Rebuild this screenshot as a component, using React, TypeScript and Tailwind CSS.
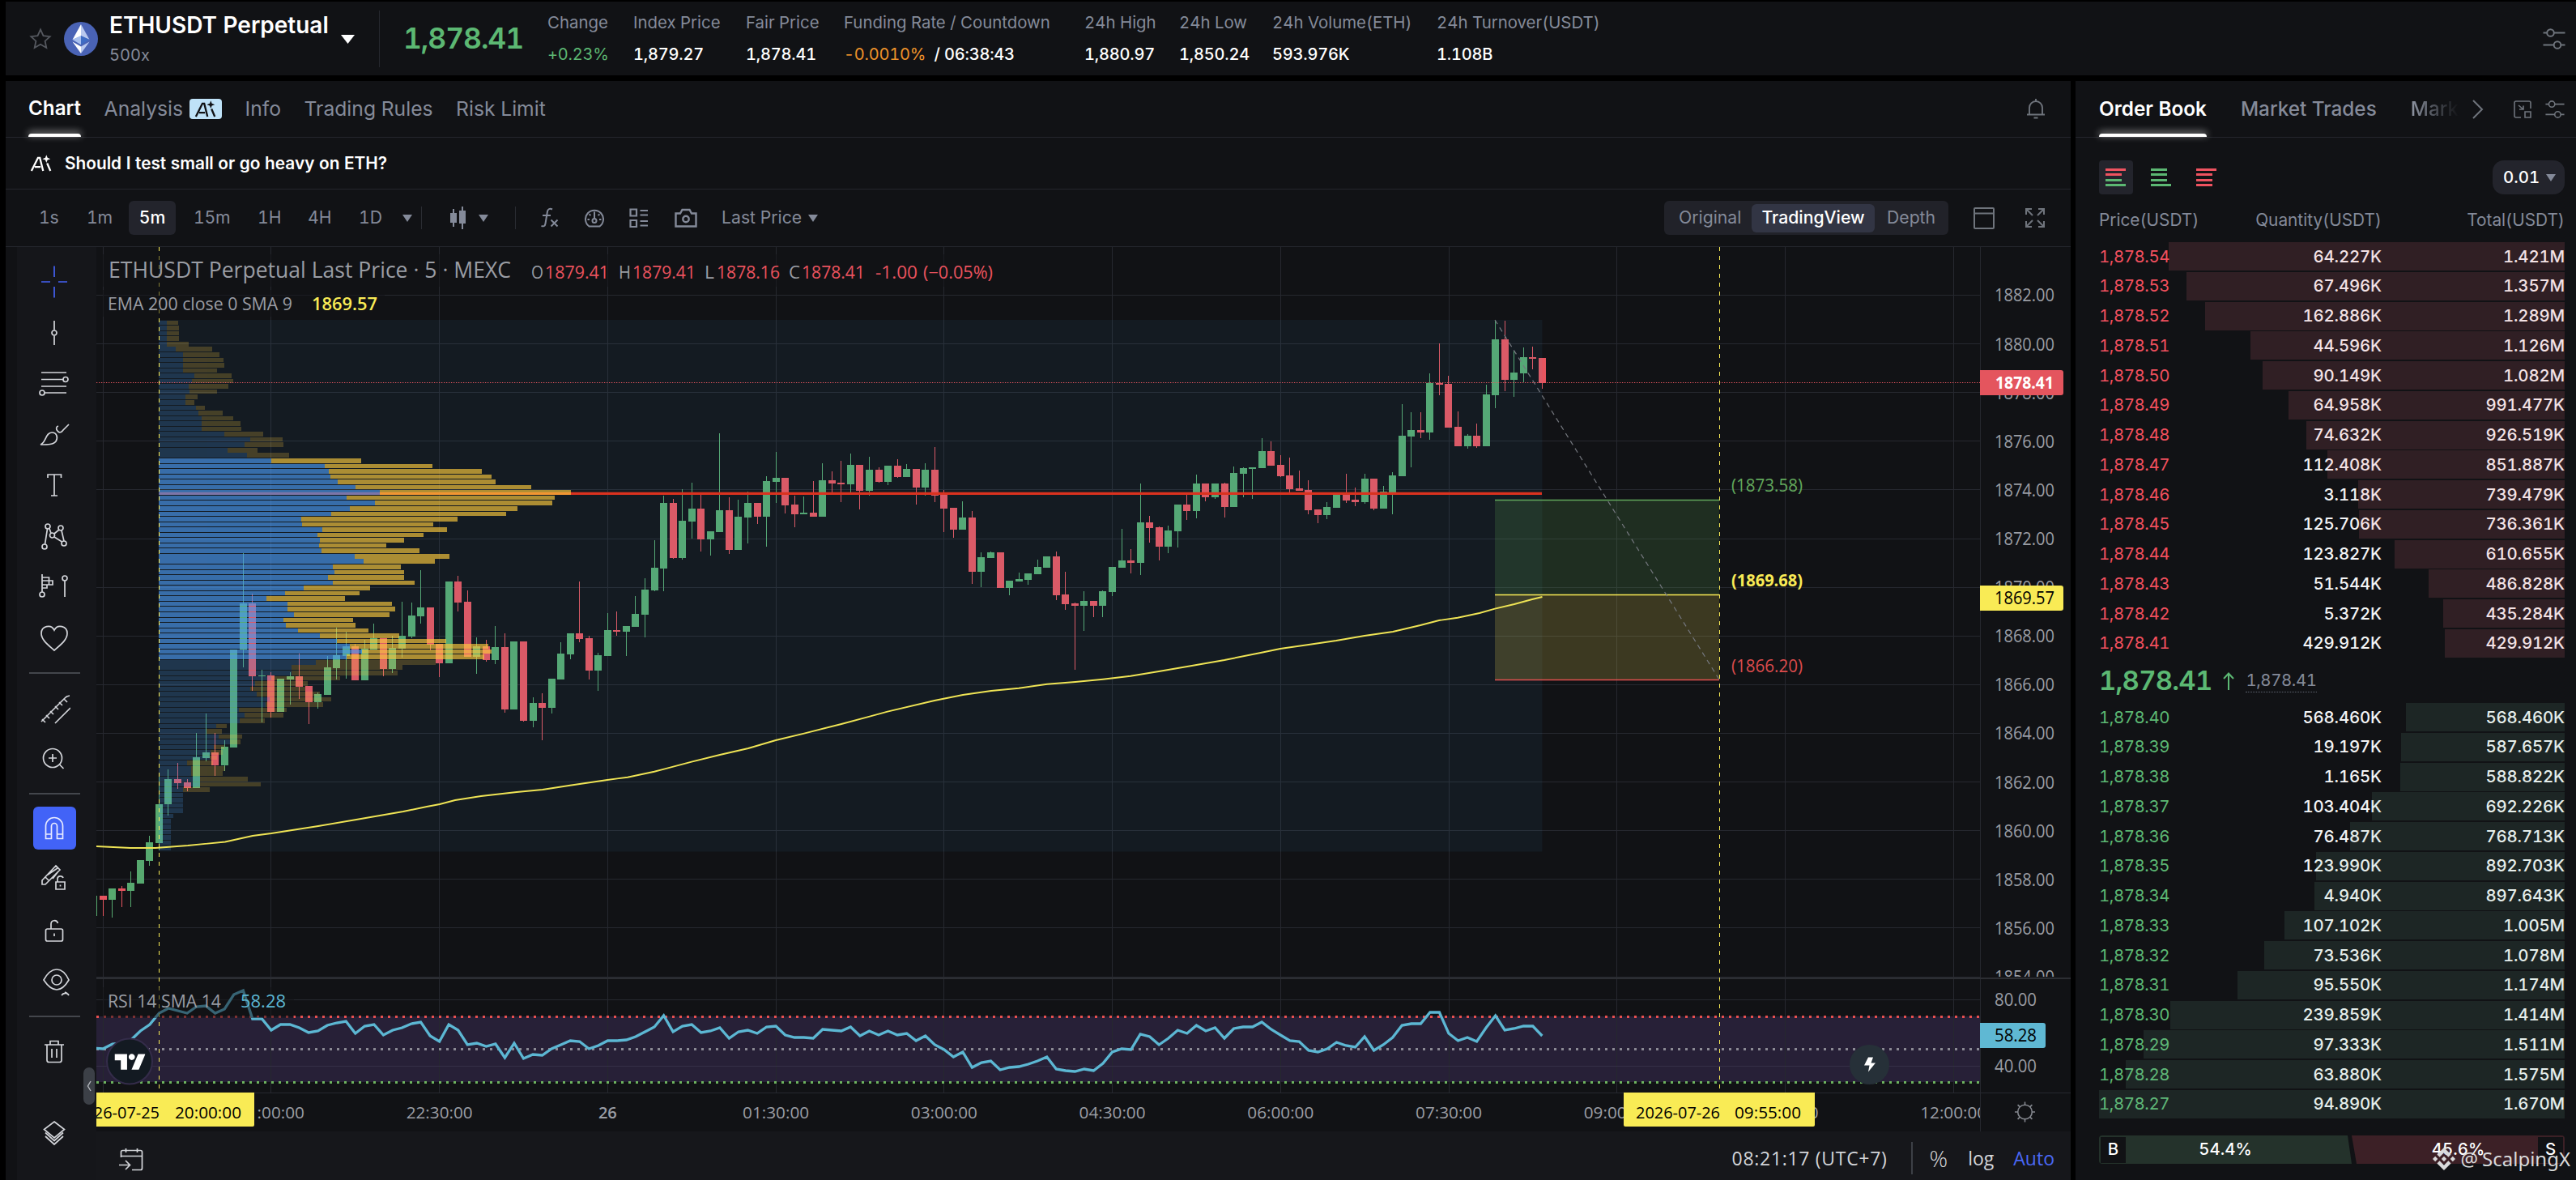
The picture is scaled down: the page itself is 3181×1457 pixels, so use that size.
import type { ReactNode } from "react";
import { SiBinance, SiTradingview } from "react-icons/si";

/* ---------- data ---------- */

// up(1)/down(0), high, body top, body bottom, low
type Candle = [number, number, number, number, number];

const candles: Candle[] = [
  [1, 1106, 1106, 1131, 1131], [0, 1106, 1106, 1111, 1131], [1, 1097, 1097, 1111, 1133], [0, 1094, 1097, 1100, 1120],
  [1, 1076, 1090, 1100, 1120], [1, 1062, 1062, 1091, 1091], [1, 1032, 1040, 1063, 1069], [1, 958, 993, 1041, 1050],
  [1, 950, 962, 993, 1007], [0, 942, 962, 967, 974], [0, 962, 966, 973, 977], [1, 905, 935, 973, 973],
  [1, 881, 929, 936, 940], [0, 905, 929, 945, 958], [1, 914, 922, 945, 952], [1, 802, 802, 923, 923],
  [1, 683, 745, 802, 824], [0, 733, 745, 835, 853], [1, 827, 834, 835, 892], [0, 830, 834, 879, 886],
  [1, 838, 838, 879, 879], [1, 830, 835, 839, 870], [0, 807, 835, 848, 863], [0, 847, 847, 867, 894],
  [1, 855, 857, 867, 875], [1, 810, 824, 858, 858], [1, 775, 809, 825, 839], [1, 780, 798, 810, 838],
  [0, 795, 798, 840, 840], [1, 790, 801, 840, 840], [1, 770, 788, 802, 802], [0, 788, 788, 826, 835],
  [1, 785, 800, 826, 831], [1, 743, 785, 801, 812], [1, 744, 760, 786, 788], [1, 704, 750, 761, 770],
  [0, 750, 750, 796, 803], [0, 795, 795, 819, 836], [1, 718, 718, 819, 819], [0, 711, 718, 744, 755],
  [0, 729, 743, 811, 811], [1, 787, 798, 811, 832], [0, 790, 798, 815, 817], [1, 773, 799, 815, 820],
  [0, 782, 799, 876, 880], [1, 792, 792, 876, 876], [0, 792, 792, 890, 891], [1, 861, 868, 890, 898],
  [0, 856, 868, 874, 914], [1, 838, 838, 874, 881], [1, 793, 807, 839, 839], [1, 782, 782, 808, 814],
  [0, 718, 782, 789, 793], [0, 785, 788, 828, 839], [1, 806, 809, 828, 853], [1, 757, 778, 810, 810],
  [0, 755, 778, 780, 785], [1, 773, 773, 780, 810], [1, 736, 758, 774, 774], [1, 714, 728, 759, 787],
  [1, 667, 701, 729, 730], [1, 612, 621, 702, 730], [0, 616, 621, 689, 690], [1, 604, 643, 689, 691],
  [1, 596, 628, 644, 665], [0, 610, 628, 666, 681], [1, 656, 656, 666, 686], [1, 535, 630, 657, 657],
  [0, 614, 630, 679, 684], [1, 617, 638, 679, 679], [1, 607, 621, 639, 671], [0, 621, 621, 638, 647],
  [1, 588, 594, 638, 675], [1, 558, 590, 595, 621], [0, 590, 590, 624, 634], [0, 612, 623, 635, 651],
  [1, 613, 633, 635, 635], [0, 594, 633, 638, 638], [1, 572, 593, 638, 638], [0, 582, 593, 597, 609],
  [0, 569, 596, 598, 620], [1, 560, 574, 598, 608], [0, 574, 574, 606, 629], [1, 564, 580, 606, 612],
  [0, 577, 580, 595, 596], [1, 575, 575, 595, 599], [0, 567, 575, 589, 590], [1, 573, 579, 589, 589],
  [0, 579, 579, 602, 623], [1, 572, 580, 602, 612], [0, 552, 580, 612, 620], [0, 605, 611, 628, 657],
  [0, 627, 627, 654, 664], [1, 619, 639, 654, 654], [0, 631, 639, 706, 721], [1, 682, 688, 706, 725],
  [1, 681, 682, 689, 689], [0, 682, 682, 726, 726], [1, 717, 717, 726, 735], [1, 707, 715, 718, 718],
  [1, 708, 708, 716, 722], [1, 691, 700, 709, 709], [1, 687, 687, 701, 701], [0, 681, 687, 735, 741],
  [0, 706, 734, 746, 753], [0, 744, 745, 748, 827], [1, 730, 742, 748, 779], [0, 742, 742, 748, 762],
  [1, 729, 730, 748, 762], [1, 700, 700, 731, 736], [1, 653, 692, 701, 701], [0, 678, 692, 695, 708],
  [1, 597, 645, 695, 710], [0, 637, 645, 652, 670], [0, 650, 651, 675, 692], [1, 649, 655, 675, 683],
  [1, 623, 623, 656, 676], [0, 610, 623, 631, 642], [1, 586, 597, 631, 640], [0, 597, 597, 614, 619],
  [1, 597, 597, 614, 616], [0, 596, 597, 626, 639], [1, 576, 584, 626, 626], [1, 577, 578, 585, 614],
  [1, 577, 577, 579, 616], [1, 541, 557, 578, 578], [0, 545, 557, 575, 575], [0, 562, 574, 588, 589],
  [0, 565, 587, 604, 609], [0, 581, 603, 606, 606], [0, 593, 605, 630, 635], [0, 629, 629, 636, 646],
  [1, 620, 626, 636, 641], [1, 610, 610, 627, 627], [0, 585, 610, 618, 621], [0, 602, 617, 620, 625],
  [1, 585, 591, 620, 622], [0, 591, 591, 628, 630], [1, 600, 607, 628, 628], [1, 583, 587, 609, 635],
  [1, 499, 538, 588, 588], [1, 509, 531, 539, 577], [0, 509, 531, 534, 541], [1, 461, 473, 534, 543],
  [0, 424, 473, 475, 488], [0, 464, 474, 528, 528], [0, 508, 527, 551, 551], [1, 536, 538, 551, 554],
  [0, 523, 538, 551, 553], [1, 475, 487, 551, 551], [1, 395, 419, 488, 504], [0, 396, 419, 469, 483],
  [1, 433, 460, 469, 490], [1, 429, 441, 461, 472], [0, 428, 441, 443, 456], [0, 442, 442, 473, 480],
];

const rsi = [
  1294, 1295, 1289, 1288, 1284, 1273, 1265, 1251, 1245, 1248, 1251, 1243, 1242, 1251, 1246, 1228, 1223, 1258, 1258,
  1272, 1265, 1265, 1269, 1275, 1273, 1266, 1263, 1261, 1276, 1267, 1265, 1278, 1272, 1269, 1264, 1262, 1279, 1286,
  1265, 1272, 1290, 1288, 1292, 1289, 1306, 1288, 1307, 1302, 1303, 1295, 1290, 1285, 1286, 1295, 1291, 1285, 1285,
  1284, 1280, 1274, 1268, 1254, 1274, 1267, 1265, 1275, 1273, 1269, 1282, 1274, 1272, 1276, 1268, 1267, 1278, 1281,
  1281, 1282, 1271, 1272, 1273, 1268, 1279, 1273, 1278, 1273, 1278, 1276, 1285, 1279, 1290, 1296, 1305, 1299, 1318,
  1312, 1310, 1321, 1318, 1317, 1314, 1310, 1305, 1320, 1322, 1323, 1320, 1322, 1313, 1299, 1295, 1296, 1277, 1280,
  1290, 1282, 1272, 1276, 1266, 1273, 1269, 1282, 1270, 1268, 1268, 1262, 1271, 1278, 1285, 1286, 1297, 1299, 1295,
  1287, 1291, 1293, 1280, 1297, 1290, 1281, 1266, 1264, 1264, 1250, 1250, 1276, 1285, 1281, 1286, 1269, 1254, 1272,
  1270, 1267, 1267, 1279,
];

const ema =
  "119,1045 161,1047 192,1047 232,1044 278,1039.5 312,1032 335,1029 393,1020 440,1012 498,1002 527,996 543,993 562,988 594,983 638,978 670,975 704,969.7 750,963 775,959.7 808,952.7 820,949.7 854,940.7 889,932 924,924 958,914 993,905.7 1039,894 1074,884.7 1096,878.7 1154,865 1189,858 1224,853 1258,849.7 1293,844.7 1328,842 1362,838.7 1396,834.7 1431,829 1466,823 1512,815 1558,805.7 1581,801 1616,796 1650,791 1685,785 1720,780 1754,772 1777,766 1800,762.7 1827,757 1846,751.7 1870,746 1892,740 1904.5,737";

// volume profile rows from the top: [buy volume, total volume]
const profile: [number, number][] = [
  [21, 53], [21, 55], [21, 55], [21, 55], [21, 82], [46, 147], [66, 167], [66, 178], [66, 180], [66, 160],
  [98, 201], [91, 205], [82, 192], [84, 160], [73, 107], [73, 98], [102, 127], [109, 176], [118, 205], [118, 225],
  [118, 228], [180, 288], [252, 342], [236, 344], [189, 272], [243, 360], [310, 559], [458, 756], [469, 893], [474, 920],
  [494, 931], [543, 1029], [611, 1139], [519, 1094], [597, 1088], [528, 991], [476, 960], [393, 826], [396, 758], [452, 796],
  [438, 732], [445, 678], [443, 628], [449, 720], [541, 803], [566, 763], [481, 669], [485, 678], [467, 678], [481, 707],
  [400, 584], [348, 555], [297, 514], [355, 644], [355, 653], [373, 637], [344, 537], [351, 543], [384, 579], [445, 664],
  [492, 794], [528, 911], [561, 920], [519, 900], [434, 765], [366, 673], [366, 660], [310, 501], [266, 411], [252, 405],
  [270, 445], [305, 476], [295, 454], [221, 353], [236, 344], [223, 292], [158, 187], [132, 174], [165, 230], [197, 225],
  [152, 180], [143, 175], [140, 160], [77, 150], [89, 182], [89, 176], [113, 245], [113, 281], [66, 140], [66, 66],
  [66, 66], [66, 66], [66, 66], [39, 39], [33, 33], [33, 33], [33, 33], [33, 33], [33, 33], [33, 33],
];

const asks = [
  ["1,878.54", "64.227K", "1.421M"],
  ["1,878.53", "67.496K", "1.357M"],
  ["1,878.52", "162.886K", "1.289M"],
  ["1,878.51", "44.596K", "1.126M"],
  ["1,878.50", "90.149K", "1.082M"],
  ["1,878.49", "64.958K", "991.477K"],
  ["1,878.48", "74.632K", "926.519K"],
  ["1,878.47", "112.408K", "851.887K"],
  ["1,878.46", "3.118K", "739.479K"],
  ["1,878.45", "125.706K", "736.361K"],
  ["1,878.44", "123.827K", "610.655K"],
  ["1,878.43", "51.544K", "486.828K"],
  ["1,878.42", "5.372K", "435.284K"],
  ["1,878.41", "429.912K", "429.912K"],
];

const bids = [
  ["1,878.40", "568.460K", "568.460K"],
  ["1,878.39", "19.197K", "587.657K"],
  ["1,878.38", "1.165K", "588.822K"],
  ["1,878.37", "103.404K", "692.226K"],
  ["1,878.36", "76.487K", "768.713K"],
  ["1,878.35", "123.990K", "892.703K"],
  ["1,878.34", "4.940K", "897.643K"],
  ["1,878.33", "107.102K", "1.005M"],
  ["1,878.32", "73.536K", "1.078M"],
  ["1,878.31", "95.550K", "1.174M"],
  ["1,878.30", "239.859K", "1.414M"],
  ["1,878.29", "97.333K", "1.511M"],
  ["1,878.28", "63.880K", "1.575M"],
  ["1,878.27", "94.890K", "1.670M"],
];

const MAX_TOTAL = 1670;
const depth = (total: string) => (parseFloat(total) * (total.endsWith("M") ? 1000 : 1)) / MAX_TOTAL;

/* ---------- small pieces ---------- */

function Caret({ className = "h-[9px] w-3" }: { className?: string }) {
  return (
    <svg viewBox="0 0 12 9" preserveAspectRatio="none" className={`shrink-0 fill-current ${className}`}>
      <path d="M0 0h12L6 9z" />
    </svg>
  );
}

function Sliders({ className }: { className: string }) {
  return (
    <svg viewBox="0 0 28 28" fill="none" stroke="currentColor" strokeWidth="1.9" className={`shrink-0 ${className}`}>
      <path d="M0.5 6.5h4.7M13.8 6.5h13.7M0.5 21.5h13.2M22.3 21.5h5.2" />
      <circle cx="9.5" cy="6.5" r="4.3" />
      <circle cx="18" cy="21.5" r="4.3" />
    </svg>
  );
}

function AiMark({ className = "h-5 w-[30px]" }: { className?: string }) {
  return (
    <svg viewBox="0 0 30 20" className={`shrink-0 overflow-visible ${className}`} fill="none" stroke="currentColor" strokeWidth="2.6">
      <path d="M1.5 20 10.5 2h2.5L17.5 20M6 14.5h8M23 9.5l4.5 10.5" />
      <path d="M22-2l1.5 4 4 1.5-4 1.5L22 9l-1.5-4-4-1.5 4-1.5z" fill="currentColor" stroke="none" />
    </svg>
  );
}

function Tool({ className, children }: { className: string; children: ReactNode }) {
  return (
    <div className={`flex shrink-0 items-center justify-center ${className}`}>
      <svg viewBox="-20 -20 40 40" fill="none" stroke="currentColor" strokeWidth="1.7" className="h-10 w-10">
        {children}
      </svg>
    </div>
  );
}

function Rule({ className }: { className: string }) {
  return (
    <div className={`flex shrink-0 items-center justify-center ${className}`}>
      <div className="h-0.5 w-[63px] bg-[#43464c]" />
    </div>
  );
}

function BookRow({ row, side }: { row: string[]; side: "ask" | "bid" }) {
  return (
    <div className="relative mb-[1.75px] flex h-[35px] shrink-0 items-center pt-px">
      <span className={`w-[140px] tracking-[-0.4px] ${side === "ask" ? "text-[#f2505e]" : "text-[#5cb873]"}`}>{row[0]}</span>
      <span className="w-[209px] text-right font-medium tracking-[-0.15px] text-[#f4f5f6]">{row[1]}</span>
      <span className="flex-1 text-right font-medium tracking-[-0.15px] text-[#f4f5f6]">{row[2]}</span>
      <div
        className={`absolute inset-y-0 right-0 ${side === "ask" ? "bg-[rgba(240,110,130,0.14)]" : "bg-[rgba(120,190,160,0.12)]"}`}
        style={{ width: `${depth(row[2]) * 100}%` }}
      />
    </div>
  );
}

/* ---------- header ---------- */

const stats: { label: string; value: ReactNode; width: string }[] = [
  { label: "Change", value: <span className="font-normal text-[#5cb873]">+0.23%</span>, width: "w-[106px]" },
  { label: "Index Price", value: "1,879.27", width: "w-[139px]" },
  { label: "Fair Price", value: "1,878.41", width: "w-[121px]" },
  {
    label: "Funding Rate / Countdown",
    value: (
      <>
        <span className="font-normal text-[#ef932a]">-0.0010%</span>&nbsp; / 06:38:43
      </>
    ),
    width: "w-[297px]",
  },
  { label: "24h High", value: "1,880.97", width: "w-[117px]" },
  { label: "24h Low", value: "1,850.24", width: "w-[115px]" },
  { label: "24h Volume(ETH)", value: "593.976K", width: "w-[203px]" },
  { label: "24h Turnover(USDT)", value: "1.108B", width: "w-[230px]" },
];

function Header() {
  return (
    <header className="flex h-[91px] items-center bg-[#111215] pl-[29px] pr-[13px]">
      <svg viewBox="0 0 28 28" fill="none" stroke="#55585f" strokeWidth="1.8" className="h-7 w-7">
        <path d="M14 2.5l3.5 7.6 8.2 1-6.1 5.6 1.7 8.3L14 20.8 6.7 25l1.7-8.3-6.1-5.6 8.2-1z" />
      </svg>
      <svg viewBox="0 0 42 42" className="ml-[15px] h-[42px] w-[42px]">
        <circle cx="21" cy="21" r="21" fill="#4a63b5" />
        <path d="M21 3v14.5L10.5 22z" fill="#fff" />
        <path d="M21 3v14.5L31.5 22z" fill="#b9c8ee" />
        <path d="M21 17v11.3L10.5 22z" fill="#a9c0ee" />
        <path d="M21 17v11.3L31.5 22z" fill="#3f6cc4" />
        <path d="M21 30.5V39L10.5 24.5z" fill="#fff" />
        <path d="M21 30.5V39l10.5-14.5z" fill="#b9c8ee" />
      </svg>
      <div className="ml-3.5 flex w-[271px] flex-col whitespace-nowrap">
        <span className="text-[28px] leading-[34px] font-semibold text-white">ETHUSDT Perpetual</span>
        <span className="mt-1.5 text-[20px] leading-7 text-[#848a99]">500x</span>
      </div>
      <Caret className="mt-0.5 ml-[15px] h-[11px] w-[17px] text-white" />
      <div className="ml-[30px] h-[70px] w-px bg-[#26282e]" />
      <span className="ml-[29px] w-[178px] text-[35.5px] leading-none font-semibold tracking-[-1.1px] text-[#5cb873]">1,878.41</span>
      <div className="flex text-[20px] whitespace-nowrap">
        {stats.map((s) => (
          <div key={s.label} className={`shrink-0 ${s.width}`}>
            <div className="text-[20.4px] leading-7 text-[#848a99]">{s.label}</div>
            <div className="mt-2.5 leading-[30px] font-medium tracking-[-0.2px] text-white">{s.value}</div>
          </div>
        ))}
      </div>
      <Sliders className="ml-auto h-7 w-7 text-[#6f747c]" />
    </header>
  );
}

/* ---------- chart ---------- */

const X0 = 127.2;
const STEP = 11.54;
const GRID_X = 207.73;
const VOL_PX = 0.4464;
const priceY = (p: number) => 364.4 + (1882 - p) * 30.06;

const timeLabels = ["", "21:00:00", "22:30:00", "26", "01:30:00", "03:00:00", "04:30:00", "06:00:00", "07:30:00", "09:00:00", "10:30:00", "12:00:00"];
const prices = [1882, 1880, 1878, 1876, 1874, 1872, 1870, 1868, 1866, 1864, 1862, 1860, 1858, 1856, 1854];

type TxtProps = { x: number; y: number; w: number; fill?: string; size?: number; weight?: number; children: string };

function Txt({ x, y, w, fill = "#9a9da4", size = 21, weight = 400, children }: TxtProps) {
  return (
    <text x={x} y={y} fontSize={size} fontWeight={weight} fill={fill} textLength={w} lengthAdjust="spacingAndGlyphs">
      {children}
    </text>
  );
}

function ChartCanvas() {
  return (
    <svg
      viewBox="119 305 2438 1092"
      className="block h-[1092px] w-[2438px]"
      fontFamily="'Open Sans', 'Noto Sans', sans-serif"
    >
      <defs>
        <clipPath id="pane">
          <rect x="119" y="305" width="2438" height="901" />
        </clipPath>
        <clipPath id="axis">
          <rect x="119" y="1340" width="2326" height="57" />
        </clipPath>
      </defs>

      <rect x="119" y="1255" width="2326" height="81" fill="#272037" />
      <g shapeRendering="crispEdges" fill="none" stroke="#26282f">
        {timeLabels.map((_, i) => (
          <path key={i} d={`M${X0 + i * GRID_X} 305V1349`} />
        ))}
        {prices.map((p) => (
          <path key={p} d={`M119 ${priceY(p)}H2445`} />
        ))}
        <path d="M119 1234.5H2445M119 1349.5H2557M2445.5 305V1397" />
        <path d="M119 1316.5H2445" stroke="#352f47" />
        <path d="M119 1208H2557" stroke="#2c2e33" strokeWidth="2" />
      </g>

      <g shapeRendering="crispEdges">
        {candles.map(([up, h, t, b, l], i) => {
          const x = X0 + (i - 1) * STEP;
          return (
            <g key={i} fill={up ? "#57a96f" : "#e6555f"}>
              <rect x={Math.round(x - 0.5)} y={h} width="1" height={l - h} />
              <rect x={Math.round(x - 4.5)} y={t} width="9" height={Math.max(b - t, 1)} />
            </g>
          );
        })}
      </g>

      {/* fixed range volume profile */}
      <rect x="196.4" y="395" width="1708" height="656.5" fill="rgb(70,150,210)" opacity="0.07" />
      <path d="M196.4 609.3H1904" stroke="#da321f" strokeWidth="3.2" />
      <g shapeRendering="crispEdges">
        {profile.map(([buy, total], i) => {
          const inArea = i >= 26 && i <= 63;
          const y = 395.7 + i * 6.55;
          return (
            <g key={i} opacity={inArea ? 0.65 : 0.21}>
              <rect x="196.4" y={y} width={buy * VOL_PX} height="5.6" fill="rgb(75,154,242)" />
              <rect x={196.4 + buy * VOL_PX} y={y} width={(total - buy) * VOL_PX} height="5.6" fill="rgb(253,203,62)" />
            </g>
          );
        })}
      </g>

      {/* short position */}
      <rect x="1846" y="617.5" width="277" height="117" fill="rgb(100,180,90)" opacity="0.18" />
      <rect x="1846" y="734.5" width="277" height="105" fill="rgb(250,230,85)" opacity="0.19" />
      <path d="M1846 617.5H2123" stroke="#62a85c" strokeWidth="1.3" />
      <path d="M1846 734.5H2123" stroke="#f9eb55" strokeWidth="1.3" />
      <path d="M1846 839.5H2123" stroke="#e04f50" strokeWidth="1.3" />
      <path d="M1846 395L2123 839" stroke="#74777e" strokeWidth="1.2" strokeDasharray="6 5" />

      <polyline points={ema} fill="none" stroke="#efe455" strokeWidth="1.9" />
      <path d="M119 472.5H2445" stroke="#e6555f" strokeWidth="1" strokeDasharray="1.3 1.7" />

      <g strokeWidth="3" strokeDasharray="3 6">
        <path d="M119 1255.5H2445" stroke="#e8504f" />
        <path d="M119 1295.5H2445" stroke="#8b8a94" />
        <path d="M119 1336.5H2445" stroke="#6db35e" />
      </g>
      <polyline
        points={rsi.map((y, i) => `${X0 + (i - 1) * STEP},${y}`).join(" ")}
        fill="none"
        stroke="#5cb7d3"
        strokeWidth="3.3"
      />
      <g stroke="#f9eb55" strokeDasharray="5 6" shapeRendering="crispEdges">
        <path d="M196.5 305V1349" />
        <path d="M2123.5 305V1349" />
      </g>

      {/* legends */}
      <g fill="#111215" opacity="0.5">
        <rect x="127" y="314" width="1104" height="40" />
        <rect x="127" y="358" width="348" height="33" />
        <rect x="127" y="1219" width="236" height="38" />
      </g>
      <Txt x={134} y={343} w={497} size={27}>ETHUSDT Perpetual Last Price · 5 · MEXC</Txt>
      <Txt x={656} y={343.5} w={15}>O</Txt>
      <Txt x={673} y={343.5} w={79} fill="#ea525e">1879.41</Txt>
      <Txt x={764} y={343.5} w={15}>H</Txt>
      <Txt x={781} y={343.5} w={78} fill="#ea525e">1879.41</Txt>
      <Txt x={870} y={343.5} w={12}>L</Txt>
      <Txt x={885} y={343.5} w={78} fill="#ea525e">1878.16</Txt>
      <Txt x={974} y={343.5} w={14}>C</Txt>
      <Txt x={990} y={343.5} w={78} fill="#ea525e">1878.41</Txt>
      <Txt x={1081} y={343.5} w={52} fill="#ea525e">-1.00</Txt>
      <Txt x={1140} y={343.5} w={86} fill="#ea525e">(−0.05%)</Txt>
      <Txt x={133} y={382.5} w={228} size={22}>EMA 200 close 0 SMA 9</Txt>
      <Txt x={385} y={382.5} w={81} size={22} weight={600} fill="#f9eb55">1869.57</Txt>
      <Txt x={133} y={1244} w={140}>RSI 14 SMA 14</Txt>
      <Txt x={297} y={1244} w={56} fill="#5cb7d3">58.28</Txt>

      <Txt x={2138} y={607} w={88} fill="#62a85c">(1873.58)</Txt>
      <Txt x={2138} y={724} w={88} weight={700} fill="#f9eb55">(1869.68)</Txt>
      <Txt x={2138} y={829.5} w={88} fill="#dc4b4c">(1866.20)</Txt>

      {/* price scale */}
      <g clipPath="url(#pane)">
        {prices.map((p) => (
          <Txt key={p} x={2463} y={priceY(p) + 8} w={74}>{`${p}.00`}</Txt>
        ))}
      </g>
      <path d="M2445 457h100q3 0 3 3v25q0 3-3 3h-100z" fill="#e4555e" />
      <Txt x={2464} y={480} w={72} weight={700} fill="#fff">1878.41</Txt>
      <path d="M2445 723h100q3 0 3 3v25q0 3-3 3h-100z" fill="#f9eb55" />
      <Txt x={2463} y={746} w={74} weight={500} fill="#000">1869.57</Txt>
      <Txt x={2463} y={1242} w={52}>80.00</Txt>
      <path d="M2445 1263h78q3 0 3 3v25q0 3-3 3h-78z" fill="#5fb8d3" />
      <Txt x={2463} y={1286} w={52} weight={500} fill="#000">58.28</Txt>
      <Txt x={2463} y={1324} w={52}>40.00</Txt>

      {/* time scale */}
      <g clipPath="url(#axis)">
        {timeLabels.map((t, i) => {
          if (!t) return null;
          const w = t.length > 2 ? 82 : 23;
          return (
            <Txt key={i} x={X0 + i * GRID_X - w / 2} y={1381} w={w} size={20.5} weight={t === "26" ? 600 : 400}>
              {t}
            </Txt>
          );
        })}
        <path d="M119 1349h195v40q0 2-2 2H119z" fill="#f9eb55" />
        <Txt x={93} y={1381} w={104} size={20.5} weight={500} fill="#000">2026-07-25</Txt>
        <Txt x={216} y={1381} w={82} size={20.5} weight={500} fill="#000">20:00:00</Txt>
        <path d="M2005 1349h236v40q0 2-2 2h-232q-2 0-2-2z" fill="#f9eb55" />
        <Txt x={2020} y={1381} w={104} size={20.5} weight={500} fill="#000">2026-07-26</Txt>
        <Txt x={2142} y={1381} w={82} size={20.5} weight={500} fill="#000">09:55:00</Txt>
      </g>
      <g transform="translate(2500.5 1373)" fill="none" stroke="#85888f" strokeWidth="1.6">
        <circle r="8.8" />
        <path d="M0-9v-3.5M0 9v3.5M-9 0h-3.5M9 0h3.5M-6.4-6.4l-2.5-2.5M6.4-6.4l2.5-2.5M-6.4 6.4l-2.5 2.5M6.4 6.4l2.5 2.5" />
      </g>

      <circle cx="160" cy="1310.5" r="28" fill="#131a22" stroke="#342c4a" strokeWidth="2" />
      <SiTradingview x={141.5} y={1292} size={38} color="#fff" />
      <circle cx="2308.5" cy="1314.5" r="24.5" fill="#263038" />
      <path d="M2307 1305.5h6l-2.5 7h5.5l-9 11 1.5-8h-6.5z" fill="#fff" />
    </svg>
  );
}

function ToolRail() {
  return (
    <div className="relative flex w-[98px] shrink-0 flex-col bg-[#15161a] pt-3 pr-1.5 text-[#d3d5da]">
      <Tool className="h-[62.5px] text-[#4462f5]">
        <path d="M0-19.5V-6M0 6v13.5M-16 0h11M5 0h11" />
      </Tool>
      <Tool className="h-[62.5px]">
        <path d="M0-15V-3.5M0 3.5V15" />
        <circle r="3" />
      </Tool>
      <Tool className="h-[62.5px]">
        <path d="M-16-13h31M-16-4.5h27M-16 4h31M-12 12h27" />
        <circle cx="14" cy="-4.5" r="3" />
        <circle cx="-15" cy="12" r="3" />
      </Tool>
      <Tool className="h-[62.5px]">
        <path d="M-17 13C-10 11-11-2-3-2 3-2 5 4 2 9-1 13-8 13-17 13zM5-10c-3 1-3 4-1 6 2 3 5 2 7-1L18-12" />
      </Tool>
      <Tool className="h-[62.5px]">
        <path d="M-8-8v-4H8.5v4M0-12v26M-4 14h8" />
      </Tool>
      <Tool className="h-[62.5px]">
        <circle cx="-8" cy="-11" r="3" />
        <circle cx="8" cy="-9" r="3" />
        <circle cx="-2.5" cy="0" r="3" />
        <circle cx="-12" cy="14" r="3" />
        <circle cx="12" cy="10" r="3" />
        <path d="M-8.5-8l-3 19M-6-8.5l2 6M6-7L0-2M9-6l3 13M0 2l9.5 6" />
      </Tool>
      <Tool className="h-[62.5px]">
        <path d="M-15-14v22M-15-10h8.5v9M-15-6h13v5h-13M-15 3h6v-4M13-6v20" />
        <circle cx="-15" cy="11" r="3" />
        <circle cx="13" cy="-9" r="3" />
      </Tool>
      <Tool className="h-[62.5px]">
        <path d="M0 17C-8 10-16 4-16-4c0-9 12-12 16-4 4-8 16-5 16 4C16 4 8 10 0 17z" />
      </Tool>
      <Rule className="h-7" />
      <Tool className="h-[62px]">
        <path d="M-16 15L13-14q2-2.5 6-3M1 17L20-2M-15 12l4 4M-10 7l4 4M-5 2l4 4M1-4l4 4M6-9l4 4M12-13l4 4" />
      </Tool>
      <Tool className="h-[59px]">
        <circle cx="-2" cy="-1" r="11.5" />
        <path d="M6.5 7l5 5M-7-1H3M-2-6V4" />
      </Tool>
      <Rule className="h-[27px]" />
      <div className="flex h-[59px] shrink-0 items-center justify-center">
        <div className="flex h-[53px] w-[53px] items-center justify-center rounded-md bg-[#4263f7] text-[#e8ebff]">
          <svg viewBox="-20 -20 40 40" fill="none" stroke="currentColor" strokeWidth="1.7" className="h-10 w-10">
            <path d="M-10.5 12.5V-3a10.5 10.5 0 0 1 21 0v15.5H3.5V-3a3.5 3.5 0 0 0-7 0v15.5zM-10.5 7h7M3.5 7h7" />
          </svg>
        </div>
      </div>
      <Tool className="h-16">
        <path d="M-15 3L2-15l5 5L-11 8l-4 0zM-11-1l5 5M-8-4L4-12M-2 1L5-8M-15 3v5M2 5h11v9H2zM4 5V1c0-4 6-4 7-1M7.5 8.5v2" />
      </Tool>
      <Tool className="h-[65px]">
        <rect x="-10.5" y="-2" width="21" height="15" rx="2" />
        <path d="M-4-2v-6c0-5 7-6 8.5-1M0 3.5v3.5" />
      </Tool>
      <Tool className="h-16">
        <path d="M-13-3Q-6-16 3-16T18-3Q11 9 3 9T-13-3z" />
        <circle cx="3" cy="-3" r="6" />
        <path d="M9 16c2-3 7-4 9 0M13 12l3 1.5" />
      </Tool>
      <Rule className="h-[19px]" />
      <Tool className="h-[67px]">
        <path d="M-12-8h24M-9-8v19q0 2.5 2.5 2.5h13Q9 13.5 9 11V-8M-5-8v-4.500h10V-8M-3-3v11M3-3v11" />
      </Tool>
      <Tool className="mt-[37px] h-[62px]">
        <path d="M0-14l12.5 9.5L0 6-12.5-4.5zM-11-0.500L0 9.5 11-0.5M-11 4L0 14 11 4" />
      </Tool>
      <div className="absolute top-[1013px] right-[2px] flex h-[46px] w-3.5 items-center justify-center rounded-full bg-[#3c4047]">
        <svg viewBox="0 0 6 14" fill="none" stroke="#b5b8be" strokeWidth="1.4" className="h-3.5 w-1.5">
          <path d="M5 1L1.5 7 5 13" />
        </svg>
      </div>
    </div>
  );
}

function ChartToolbar() {
  return (
    <div className="flex h-[71px] items-center border-b border-[#24262c] pr-[32px] text-[21.2px] text-[#848a99]">
      <div className="flex w-[490px] shrink-0 items-center">
        <span className="ml-[41px] w-[59px] tracking-[-0.3px]">1s</span>
        <span className="w-[51px] tracking-[-0.3px]">1m</span>
        <span className="mx-px flex h-[42px] w-[58px] items-center justify-center rounded-md bg-[#23242c] font-medium text-white">5m</span>
        <span className="ml-[21px] w-[79px] tracking-[-0.3px]">15m</span>
        <span className="w-[62px]">1H</span>
        <span className="w-[63px]">4H</span>
        <span>1D</span>
      </div>
      <Caret />
      <div className="ml-[11px] h-7 w-px bg-[#2a2c32]" />
      <svg viewBox="0 0 22 28" className="ml-[34px] h-7 w-[22px] fill-current">
        <path d="M1 8h8v12H1zM4 3h2v22H4zM12 5h8v16h-8zM15 0h2v28h-2z" />
      </svg>
      <Caret className="ml-[14px] h-[9px] w-3" />
      <div className="ml-[33px] h-7 w-px bg-[#2a2c32]" />
      <svg viewBox="0 0 22 26" fill="none" stroke="currentColor" strokeWidth="2" className="ml-[31px] h-[26px] w-[22px]">
        <path d="M14 2.5c-3-1.5-5.5-.5-6 2.5L5.5 20c-.5 3-2 4-5 3M2 10h10M12.5 15.5l8 8M20.5 15.5l-8 8" />
      </svg>
      <svg viewBox="0 0 24 24" fill="none" stroke="currentColor" strokeWidth="2" className="ml-[32px] h-6 w-6">
        <path d="M5.5 22.5a11 11 0 1 1 13 0zM12 4.5v8M5.5 7.5l2 1.5M18.5 7.5l-2 1.5M3.5 14h2.5M18 14h2.5" />
        <circle cx="12" cy="15.5" r="2.5" />
      </svg>
      <svg viewBox="0 0 24 26" fill="none" stroke="currentColor" strokeWidth="2.2" className="ml-[31px] h-[26px] w-6">
        <path d="M1.5 2.5h7.5v8H1.5zM1.5 16h7.5v8H1.5zM13.5 4h9.5M13.5 9.5h9.5M13.5 17h9.5M13.5 22.5h9.5" />
      </svg>
      <svg viewBox="0 0 28 24" fill="none" stroke="currentColor" strokeWidth="2.4" className="ml-[32px] h-6 w-7">
        <path d="M1.5 22.5v-16h5.5l2.5-4.5h9l2.5 4.5h5.5v16z" />
        <circle cx="14" cy="13.5" r="3.7" />
      </svg>
      <span className="ml-[30px] w-[107px]">Last Price</span>
      <Caret />
      <div className="ml-auto flex h-[42px] items-center rounded-md bg-[#212229] px-[3px]">
        <span className="w-[105px] pl-[15px]">Original</span>
        <span className="flex h-[35px] w-[152px] items-center justify-center rounded-md bg-[#323544] font-medium text-white">TradingView</span>
        <span className="w-[88px] pl-[15px]">Depth</span>
      </div>
      <svg viewBox="0 0 26 27" fill="none" stroke="#6f747c" strokeWidth="2" className="ml-[31px] h-[27px] w-[26px]">
        <rect x="1" y="1" width="24" height="25" rx="1" />
        <path d="M1 7.5h24" />
      </svg>
      <svg viewBox="0 0 24 24" fill="none" stroke="#6f747c" strokeWidth="2" className="ml-[38px] h-6 w-6">
        <path d="M1 8V1h7M1 1l8 8M16 1h7v7M23 1l-8 8M1 16v7h7M1 23l8-8M23 16v7h-7M23 23l-8-8" />
      </svg>
    </div>
  );
}

function ChartPanel() {
  return (
    <section className="flex w-[2550px] shrink-0 flex-col bg-[#111215]">
      <div className="flex h-[70px] items-center gap-[28.5px] border-b border-[#24262c] pr-[31px] pl-7 text-[24.7px] text-[#848a99]">
        <span className="relative flex h-full items-center text-[24.2px] font-semibold text-white">
          Chart
          <span className="absolute inset-x-0 bottom-0 h-1 rounded-t bg-white shadow-[0_-2px_9px_1px_rgba(255,255,255,0.45)]" />
        </span>
        <span className="flex items-center">
          Analysis
          <span className="ml-2 flex h-[25px] w-[40px] items-center justify-center rounded bg-[#bfe2f8] text-[#111215]">
            <AiMark className="mt-0.5 h-[18px] w-7" />
          </span>
        </span>
        <span>Info</span>
        <span>Trading Rules</span>
        <span>Risk Limit</span>
        <svg viewBox="0 0 24 26" fill="none" stroke="#6f747c" strokeWidth="1.9" className="ml-auto h-[26px] w-6">
          <path d="M1 19.5h22M4 19.5V11a8 8 0 0 1 16 0v8.5M12 3V0M9.5 23.5h5" />
        </svg>
      </div>
      <div className="flex h-16 items-center border-b border-[#24262c] pl-[30px] text-[20.8px] font-semibold text-white">
        <AiMark className="h-[18px] w-[28px]" />
        <span className="ml-[15px]">Should I test small or go heavy on ETH?</span>
      </div>
      <ChartToolbar />
      <div className="flex h-[1152px] pl-3.5">
        <ToolRail />
        <div className="flex w-[2438px] shrink-0 flex-col">
          <ChartCanvas />
          <div className="flex h-[60px] items-center bg-[#16171b] pt-1.5 pr-5 pl-[28px] font-['Open_Sans',sans-serif] text-[23px] text-[#d3d5d9]">
            <svg viewBox="0 0 30 30" fill="none" stroke="currentColor" strokeWidth="1.7" className="mt-1 h-[30px] w-[30px]">
              <path d="M2.5 12V5.5q0-2 2-2h22q2 0 2 2v20q0 2-2 2H16M2.5 10.5h26M8.5 1v5M22.5 1v5M0 21.5h13M8 16l5.5 5.5L8 27" />
            </svg>
            <span className="ml-auto tracking-[0.7px]">08:21:17 (UTC+7)</span>
            <div className="ml-[29px] h-10 w-0.5 bg-[#3d4046]" />
            <span className="ml-[21px] text-[28px] font-light">%</span>
            <span className="ml-[25px] font-medium">log</span>
            <span className="ml-[24px] text-[#4a68f5]">Auto</span>
          </div>
        </div>
      </div>
    </section>
  );
}

/* ---------- order book ---------- */

const modeIcons = [
  [["#ef5360", 25], ["#ef5360", 20], ["#5cb873", 20], ["#5cb873", 25]],
  [["#5cb873", 20], ["#5cb873", 20], ["#5cb873", 20], ["#5cb873", 25]],
  [["#ef5360", 25], ["#ef5360", 20], ["#ef5360", 20], ["#ef5360", 20]],
] as [string, number][][];

function OrderBook() {
  return (
    <section className="relative flex flex-1 flex-col bg-[#111215] text-[20.4px]">
      <div className="flex h-[70px] items-center border-b border-[#24262c] pr-[14px] pl-[29px] text-[24.3px] font-medium text-[#848a99]">
        <span className="relative flex h-full items-center font-semibold whitespace-nowrap text-white">
          Order Book
          <span className="absolute inset-x-0 bottom-0 h-1 rounded-t bg-white shadow-[0_-2px_9px_1px_rgba(255,255,255,0.45)]" />
        </span>
        <span className="ml-[42px] whitespace-nowrap">Market Trades</span>
        <span className="ml-[42px] w-[60px] overflow-hidden bg-gradient-to-r from-[#9197a5] to-[#111215] bg-clip-text text-transparent">Mark</span>
        <svg viewBox="0 0 14 24" fill="none" stroke="#6f747c" strokeWidth="2" className="ml-[16px] h-6 w-3.5">
          <path d="M1 1l11 11L1 23" />
        </svg>
        <svg viewBox="0 0 22 22" fill="none" stroke="#6f747c" strokeWidth="1.6" className="ml-auto h-[22px] w-[22px]">
          <path d="M9 21H3q-2 0-2-2V3q0-2 2-2h16q2 0 2 2v7M6 6l6 5M12 6.5V11H7M14 14h7v7h-7z" />
        </svg>
        <Sliders className="ml-[17px] h-6 w-6 text-[#6f747c]" />
      </div>

      <div className="flex flex-1 flex-col pt-7 pr-3.5 pl-[29px]">
        <div className="flex h-[42px] items-center gap-3.5">
          {modeIcons.map((bars, i) => (
            <div key={i} className={`flex h-[42px] w-[42px] items-center pl-2 ${i === 0 ? "rounded bg-[#23242c]" : ""}`}>
              <div className="flex flex-col gap-[3.3px]">
                {bars.map(([color, width], j) => (
                  <div key={j} className="h-[3px]" style={{ background: color, width }} />
                ))}
              </div>
            </div>
          ))}
          <div className="ml-auto flex h-[42px] w-[89px] items-center justify-between rounded-[14px] bg-[#23242c] pr-[11px] pl-[13px] font-medium text-white">
            0.01
            <Caret className="h-[9px] w-3 text-[#848a99]" />
          </div>
        </div>

        <div className="mt-[14px] flex h-9 items-center text-[20.8px] text-[#848a99]">
          <span className="w-[140px]">Price(USDT)</span>
          <span className="w-[209px] text-right">Quantity(USDT)</span>
          <span className="flex-1 text-right">Total(USDT)</span>
        </div>

        <div className="mt-[9px] flex h-[514px] flex-col">
          {asks.map((r) => (
            <BookRow key={r[0]} row={r} side="ask" />
          ))}
        </div>

        <div className="flex h-[55px] items-center">
          <span className="text-[33px] font-semibold tracking-[-0.8px] text-[#5cb873]">1,878.41</span>
          <svg viewBox="0 0 14 22" fill="none" stroke="#5cb873" strokeWidth="2" className="ml-3.5 h-[22px] w-3.5">
            <path d="M7 22V1.5M1 8l6-6.5L13 8" />
          </svg>
          <span className="ml-3.5 border-b border-dotted border-[#5f6470] leading-[28px] tracking-[-0.4px] text-[#848a99]">1,878.41</span>
        </div>

        <div className="flex h-[514px] flex-col">
          {bids.map((r) => (
            <BookRow key={r[0]} row={r} side="bid" />
          ))}
        </div>

        <div className="mt-5 flex h-[35px] font-medium text-white">
          <div className="relative flex w-[312px] items-center justify-center rounded-l bg-[#24322b] [clip-path:polygon(0_0,calc(100%_-_5px)_0,100%_100%,0_100%)]">
            <span className="absolute inset-y-[1.5px] left-0.5 flex w-[31px] items-center justify-center bg-[#111215]">B</span>
            54.4%
          </div>
          <div className="relative flex flex-1 items-center justify-center rounded-r bg-[#3c2026] [clip-path:polygon(0_0,100%_0,100%_100%,6px_100%)]">
            <span className="absolute inset-y-[1.5px] right-0.5 flex w-[31px] items-center justify-center bg-[#111215]">S</span>
            45.6%
          </div>
        </div>
      </div>

      {/* watermark */}
      <div className="absolute right-[7px] bottom-2.5 flex items-center gap-1.5 text-[#d9dadb]">
        <SiBinance size={28} />
        <span className="font-['Noto_Sans',sans-serif] text-[24px] leading-8">
          <span className="mr-[5px]">@</span>ScalpingX
        </span>
      </div>
    </section>
  );
}

export default function App() {
  return (
    <div className="flex h-[1457px] w-[3181px] flex-col overflow-hidden bg-black pt-0.5 pl-[7px] font-[Inter,sans-serif] tabular-nums">
      <Header />
      <div className="mt-[7px] flex flex-1 gap-1.5">
        <ChartPanel />
        <OrderBook />
      </div>
    </div>
  );
}
